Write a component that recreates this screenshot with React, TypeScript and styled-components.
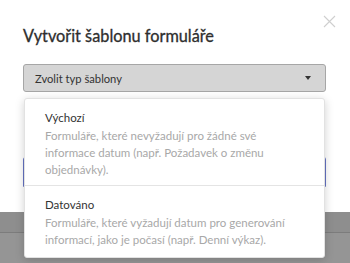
import React from "react";
import styled, { createGlobalStyle } from "styled-components";

const Global = createGlobalStyle`
  html, body { margin: 0; padding: 0; }
  body { font-family: Lato, "Open Sans", sans-serif; background: #fff; }
  * { box-sizing: border-box; }
`;

const Page = styled.div`
  width: 350px;
  height: 263px;
  overflow: hidden;
  display: flex;
  flex-direction: column;
  background: #8f8f8f;
`;

const Modal = styled.div`
  position: relative;
  height: 212px;
  flex: none;
  background: #fff;
  padding: 25px 24px 0 23px;
  display: flex;
  flex-direction: column;
`;

const Backdrop = styled.div`
  flex: 1;
  display: flex;
  flex-direction: column;
`;

const BackdropBand = styled.div<{ $h: number; $bg: string }>`
  height: ${(p) => p.$h}px;
  flex: none;
  background: ${(p) => p.$bg};
`;

const Close = styled.button`
  position: absolute;
  top: 15px;
  right: 14px;
  width: 13px;
  height: 13px;
  padding: 0;
  border: none;
  background: none;
  display: flex;
`;

const Title = styled.h2`
  margin: 0;
  font-size: 16.3px;
  line-height: 22px;
  font-weight: 400;
  color: #2e2e2e;
  -webkit-text-stroke: 0.3px #2e2e2e;
`;

const Select = styled.div`
  margin-top: 17px;
  height: 28px;
  border: 1px solid #a6a6a6;
  border-radius: 3px;
  background: #d5d5d5;
  display: flex;
  align-items: center;
  justify-content: space-between;
  padding: 0 14px 0 11px;
  font-size: 11.2px;
  color: #333;
`;

const Caret = styled.span`
  width: 0;
  height: 0;
  border-left: 3.5px solid transparent;
  border-right: 3.5px solid transparent;
  border-top: 4px solid #333;
`;

const Hidden = styled.div`
  margin-top: 65px;
  height: 30px;
  border: 1px solid #6573c3;
  border-bottom-color: #e3e3e3;
  border-radius: 3px 3px 0 0;
`;

const Menu = styled.ul`
  position: absolute;
  top: 98px;
  left: 24px;
  width: 301px;
  margin: 0;
  padding: 0;
  list-style: none;
  background: #fff;
  border: 1px solid #e2e2e2;
  border-radius: 3px;
  box-shadow: 0 2px 10px rgba(0, 0, 0, 0.18);
`;

const Item = styled.li<{ $last?: boolean }>`
  padding: 10px 20px ${(p) => (p.$last ? 9 : 7)}px 20px;
  border-bottom: ${(p) => (p.$last ? "none" : "1px solid #e4e4e4")};
`;

const ItemTitle = styled.div`
  font-size: 11.5px;
  line-height: 18px;
  color: #333;
`;

const ItemDesc = styled.div`
  font-size: 11.5px;
  line-height: 17px;
  color: #a8a8a8;
`;

export default function App() {
  return (
    <>
      <Global />
      <Page>
        <Modal>
          <Close aria-label="Zavřít">
            <svg width="13" height="13" viewBox="0 0 13 13">
              <path d="M1 1 L12 12 M12 1 L1 12" stroke="#cfcfcf" strokeWidth="1.1" />
            </svg>
          </Close>
          <Title>Vytvořit šablonu formuláře</Title>
          <Select>
            <span>Zvolit typ šablony</span>
            <Caret />
          </Select>
          <Hidden />
          <Menu>
            <Item>
              <ItemTitle>Výchozí</ItemTitle>
              <ItemDesc>
                Formuláře, které nevyžadují pro žádné své informace datum (např. Požadavek o změnu objednávky).
              </ItemDesc>
            </Item>
            <Item $last>
              <ItemTitle>Datováno</ItemTitle>
              <ItemDesc>
                Formuláře, které vyžadují datum pro generování informací, jako je počasí (např. Denní výkaz).
              </ItemDesc>
            </Item>
          </Menu>
        </Modal>
        <Backdrop>
          <BackdropBand $h={20} $bg="#8e8e8e" />
          <BackdropBand $h={1} $bg="#7c7c7c" />
          <BackdropBand $h={30} $bg="#959595" />
        </Backdrop>
      </Page>
    </>
  );
}
